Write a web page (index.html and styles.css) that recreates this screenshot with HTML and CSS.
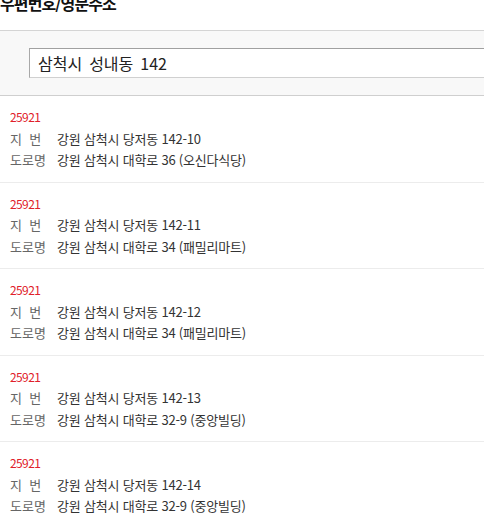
FILE: index.html
```html
<!DOCTYPE html>
<html lang="ko">
<head>
<meta charset="utf-8">
<link rel="stylesheet" href="styles.css">
</head>
<body>
<h1 class="title">우편번호/영문주소</h1>
<div class="search">
  <div class="search-box">삼척시 성내동 142</div>
</div>
<ul class="results">
  <li class="item">
    <div class="zip">25921</div>
    <div class="row"><span class="label">지&nbsp;&nbsp;번</span><span class="value">강원 삼척시 당저동 142-10</span></div>
    <div class="row"><span class="label">도로명</span><span class="value">강원 삼척시 대학로 36 (오신다식당)</span></div>
  </li>
  <li class="item">
    <div class="zip">25921</div>
    <div class="row"><span class="label">지&nbsp;&nbsp;번</span><span class="value">강원 삼척시 당저동 142-11</span></div>
    <div class="row"><span class="label">도로명</span><span class="value">강원 삼척시 대학로 34 (패밀리마트)</span></div>
  </li>
  <li class="item">
    <div class="zip">25921</div>
    <div class="row"><span class="label">지&nbsp;&nbsp;번</span><span class="value">강원 삼척시 당저동 142-12</span></div>
    <div class="row"><span class="label">도로명</span><span class="value">강원 삼척시 대학로 34 (패밀리마트)</span></div>
  </li>
  <li class="item">
    <div class="zip">25921</div>
    <div class="row"><span class="label">지&nbsp;&nbsp;번</span><span class="value">강원 삼척시 당저동 142-13</span></div>
    <div class="row"><span class="label">도로명</span><span class="value">강원 삼척시 대학로 32-9 (중앙빌딩)</span></div>
  </li>
  <li class="item">
    <div class="zip">25921</div>
    <div class="row"><span class="label">지&nbsp;&nbsp;번</span><span class="value">강원 삼척시 당저동 142-14</span></div>
    <div class="row"><span class="label">도로명</span><span class="value">강원 삼척시 대학로 32-9 (중앙빌딩)</span></div>
  </li>
</ul>
</body>
</html>
```
FILE: styles.css
```css
html, body {
  margin: 0;
  padding: 0;
  background: #fff;
  overflow: hidden;
}
body {
  font-family: "Noto Sans CJK KR", "Noto Sans", sans-serif;
  color: #333;
}
.title {
  margin: -7px 0 0 0;
  height: 20px;
  line-height: 20px;
  font-size: 16px;
  font-weight: bold;
  color: #111;
  letter-spacing: -0.9px;
}
.search {
  margin-top: 17px;
  background: #f8f8f8;
  border-top: 1px solid #d4d4d4;
  border-bottom: 1px solid #cfcfcf;
  padding: 17px 0 17px 29px;
  overflow: hidden;
}
.search-box {
  width: 480px;
  height: 28px;
  box-sizing: content-box;
  background: #fff;
  border-top: 1px solid #a0a0a0;
  border-left: 1px solid #a8a8a8;
  border-bottom: 1px solid #d0d0d0;
  border-right: 1px solid #d0d0d0;
  padding: 0 0 0 8px;
  font-size: 16px;
  line-height: 28px;
  word-spacing: 2.5px;
  color: #222;
}
.results {
  list-style: none;
  margin: 0;
  padding: 0;
}
.item {
  padding: 10px 10px 11px;
  border-bottom: 1px solid #ececec;
  font-size: 13px;
  line-height: 21.5px;
}
.zip {
  color: #e0202a;
  font-size: 12px;
  letter-spacing: -0.6px;
}
.row {
  display: flex;
}
.label {
  width: 47px;
  color: #666;
  flex: none;
}
.value {
  color: #333;
  letter-spacing: -0.2px;
}
```
